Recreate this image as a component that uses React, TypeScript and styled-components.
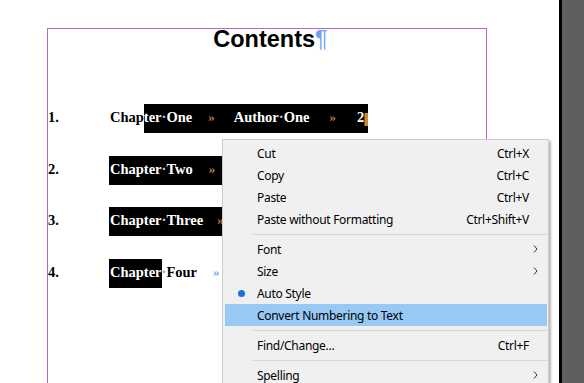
import styled, { createGlobalStyle } from "styled-components";

const GlobalStyle = createGlobalStyle`
    html, body {
        margin: 0;
        padding: 0;
        overflow: hidden;
        background: #ffffff;
    }
`;

const Screen = styled.div`
    position: relative;
    display: flex;
    width: 584px;
    height: 383px;
    overflow: hidden;
`;

const Page = styled.div`
    flex: 1;
    background: #ffffff;
    overflow: hidden;
`;

const Divider = styled.div`
    width: 3px;
    background: #000000;
`;

const Pasteboard = styled.div`
    width: 22px;
    background: #5f5f5f;
`;

const Frame = styled.div`
    box-sizing: border-box;
    margin: 28px 0 0 47px;
    width: 440px;
    height: 420px;
    border: 1px solid #bd62d6;
    border-bottom: none;
`;

const Title = styled.h1`
    margin: 0;
    text-align: center;
    font-family: "Liberation Sans", Arial, sans-serif;
    font-weight: 700;
    font-size: 23.5px;
    line-height: 21px;
    color: #000;
`;

const Pilcrow = styled.span`
    font-weight: 400;
    color: #6ea2f2;
    margin-right: -7px;
`;

const Entries = styled.div`
    display: flex;
    flex-direction: column;
    gap: 22.67px;
    margin-top: 54px;
`;

const Row = styled.div`
    display: flex;
    height: 29px;
    line-height: 26px;
    font-family: "Liberation Serif", "Times New Roman", serif;
    font-weight: 700;
    font-size: 14.5px;
    color: #000;
    white-space: pre;
`;

const Num = styled.span`
    width: 61px;
`;

const Plain = styled.span<{ $lead?: boolean }>`
    padding-left: ${(p) => (p.$lead ? "1px" : "0")};
`;

const Hl = styled.span<{ $lead?: boolean; $tail?: number }>`
    display: flex;
    background: #000;
    color: #fff;
    padding-left: ${(p) => (p.$lead ? "1px" : "0")};
    padding-right: ${(p) => p.$tail ?? 0}px;
`;

const Dot = styled.span<{ $inv?: boolean }>`
    color: ${(p) => (p.$inv ? "#c9c9c9" : "#6ea2f2")};
`;

const Mark = styled.span<{ $inv?: boolean; $l: number; $r?: number }>`
    font-size: 13px;
    color: ${(p) => (p.$inv ? "#c48a34" : "#6ea2f2")};
    margin-left: ${(p) => p.$l}px;
    margin-right: ${(p) => p.$r ?? 0}px;
`;

const Cursor = styled.span`
    width: 4px;
    height: 13px;
    margin-top: 9px;
    background: #c48a34;
    border-left: 1px solid #7a4f12;
    box-sizing: border-box;
`;

const Menu = styled.div`
    position: absolute;
    left: 222px;
    top: 139px;
    width: 327px;
    height: 260px;
    box-sizing: border-box;
    padding: 2px 1px 0 2px;
    background: #f0f0f0;
    border: 1px solid #cccccc;
    box-shadow: 2px 2px 2px rgba(0, 0, 0, 0.28);
    font-family: "Noto Sans", "Segoe UI", sans-serif;
    font-size: 12px;
    letter-spacing: -0.3px;
    color: #000;
`;

const Item = styled.div<{ $active?: boolean }>`
    display: flex;
    align-items: center;
    height: 22px;
    padding-right: 8px;
    background: ${(p) => (p.$active ? "#98c8f4" : "transparent")};
`;

const IconCell = styled.span`
    display: flex;
    justify-content: center;
    width: 32px;
`;

const Bullet = styled.span`
    width: 7px;
    height: 7px;
    border-radius: 50%;
    background: #1c6fdc;
`;

const Label = styled.span`
    flex: 1;
`;

const Shortcut = styled.span`
    margin-right: 10px;
`;

const Arrow = styled.svg`
    width: 5px;
    height: 8px;
    margin-right: 1px;
`;

const Sep = styled.div`
    height: 8px;
    display: flex;
    align-items: center;
    padding-left: 28px;
    &::after {
        content: "";
        flex: 1;
        height: 1px;
        background: #d6d6d6;
    }
`;

type Entry = { label: string; shortcut?: string; sub?: boolean; dot?: boolean; active?: boolean } | "sep";

const menu: Entry[] = [
    { label: "Cut", shortcut: "Ctrl+X" },
    { label: "Copy", shortcut: "Ctrl+C" },
    { label: "Paste", shortcut: "Ctrl+V" },
    { label: "Paste without Formatting", shortcut: "Ctrl+Shift+V" },
    "sep",
    { label: "Font", sub: true },
    { label: "Size", sub: true },
    { label: "Auto Style", dot: true },
    { label: "Convert Numbering to Text", active: true },
    "sep",
    { label: "Find/Change...", shortcut: "Ctrl+F" },
    "sep",
    { label: "Spelling", sub: true },
];

function ContextMenu() {
    return (
        <Menu>
            {menu.map((m, i) =>
                m === "sep" ? (
                    <Sep key={i} />
                ) : (
                    <Item key={i} $active={m.active}>
                        <IconCell>{m.dot && <Bullet />}</IconCell>
                        <Label>{m.label}</Label>
                        {m.shortcut && <Shortcut>{m.shortcut}</Shortcut>}
                        {m.sub && (
                            <Arrow viewBox="0 0 5 8">
                                <path d="M1 0.5 L4 4 L1 7.5" fill="none" stroke="#333" strokeWidth="1" />
                            </Arrow>
                        )}
                    </Item>
                )
            )}
        </Menu>
    );
}

export default function App() {
    return (
        <>
            <GlobalStyle />
            <Screen>
                <Page>
                    <Frame>
                        <Title>
                            Contents<Pilcrow>¶</Pilcrow>
                        </Title>
                        <Entries>
                            <Row>
                                <Num>1.</Num>
                                <Plain $lead>Chap</Plain>
                                <Hl>
                                    ter<Dot $inv>·</Dot>One
                                    <Mark $inv $l={16} $r={19}>»</Mark>
                                    Author<Dot $inv>·</Dot>One
                                    <Mark $inv $l={20} $r={21}>»</Mark>
                                    2
                                    <Cursor />
                                </Hl>
                            </Row>
                            <Row>
                                <Num>2.</Num>
                                <Hl $lead $tail={30}>
                                    Chapter<Dot $inv>·</Dot>Two
                                    <Mark $inv $l={16}>»</Mark>
                                </Hl>
                            </Row>
                            <Row>
                                <Num>3.</Num>
                                <Hl $lead $tail={30}>
                                    Chapter<Dot $inv>·</Dot>Three
                                    <Mark $inv $l={14}>»</Mark>
                                </Hl>
                            </Row>
                            <Row>
                                <Num>4.</Num>
                                <Hl $lead>Chapter</Hl>
                                <Plain>
                                    <Dot>·</Dot>Four
                                </Plain>
                                <Mark $l={16}>»</Mark>
                            </Row>
                        </Entries>
                    </Frame>
                </Page>
                <Divider />
                <Pasteboard />
                <ContextMenu />
            </Screen>
        </>
    );
}
